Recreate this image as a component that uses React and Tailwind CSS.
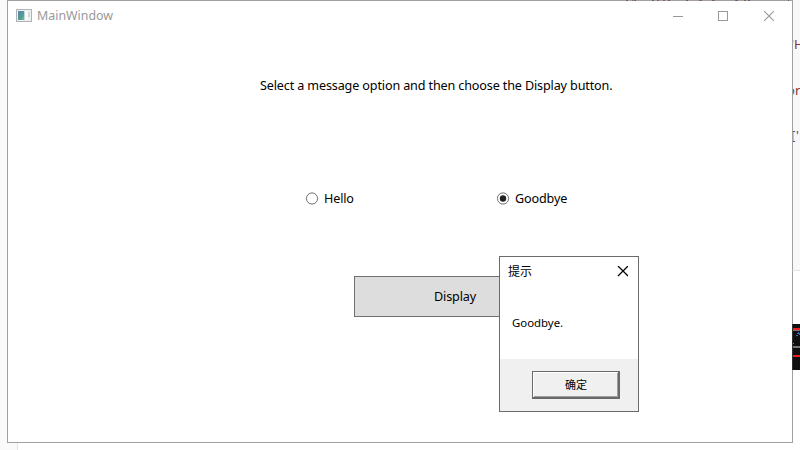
const pageFont = "font-['Noto_Sans','Noto_Sans_CJK_SC',sans-serif]";
const label = "text-[12.6px] leading-[20px] tracking-[-0.14px] whitespace-nowrap";

function WindowIcon() {
  return (
    <svg width="16" height="13" viewBox="0 0 16 13" shapeRendering="crispEdges" aria-hidden="true">
      <defs>
        <linearGradient id="pane" x1="0" y1="0" x2="1" y2="1">
          <stop offset="0" stopColor="#5a86b4" />
          <stop offset=".55" stopColor="#4f9a94" />
          <stop offset="1" stopColor="#7cb88c" />
        </linearGradient>
      </defs>
      <rect x="0.5" y="0.5" width="15" height="12" fill="#eef0f1" stroke="#b0b3b6" />
      <rect x="2" y="2" width="6" height="9" fill="url(#pane)" />
      <rect x="8" y="2" width="1" height="9" fill="#c3d8d6" />
      <rect x="9" y="2" width="3" height="9" fill="#f8f8f8" />
      <rect x="12" y="3" width="2" height="5" fill="#cfdcd8" />
    </svg>
  );
}

function TitleBar() {
  return (
    <header className="flex h-[29px] items-center pl-2 text-[#999999]">
      <WindowIcon />
      <h1 className="ml-[5px] flex-1 text-[12.4px] leading-[18px]">MainWindow</h1>
      <div className="mr-[18px] flex items-center">
        <svg width="10" height="10" shapeRendering="crispEdges"><path d="M0 5.5H10" stroke="currentColor" /></svg>
        <svg className="ml-[35px]" width="10" height="10" shapeRendering="crispEdges"><rect x=".5" y=".5" width="9" height="9" fill="none" stroke="currentColor" /></svg>
        <svg className="ml-9" width="10" height="10"><path d="M0 0L10 10M10 0L0 10" stroke="currentColor" strokeWidth="1.1" /></svg>
      </div>
    </header>
  );
}

function Radio({ text, checked }) {
  return (
    <div className="flex items-center gap-[5px]">
      <svg width="13" height="14" aria-hidden="true">
        <circle cx="6" cy="6.5" r="5.6" fill="white" stroke="#707070" />
        {checked && <circle cx="6" cy="6.5" r="3.2" fill="#212121" />}
      </svg>
      <span className={label}>{text}</span>
    </div>
  );
}

function MessageBox() {
  return (
    <section className="absolute left-[499px] top-[256px] flex h-[156px] w-[140px] flex-col border border-[#6b6b6b] bg-white">
      <header className="flex h-[29px] items-center justify-between pl-2 pr-[10px]">
        <h2 className="text-[12px] leading-[18px]">提示</h2>
        <svg width="11" height="11"><path d="M1 0L11 10M11 0L1 10" stroke="black" strokeWidth="1.25" /></svg>
      </header>
      <p className="flex-1 pl-3 pt-[28px] text-[11.4px] leading-[18px]">Goodbye.</p>
      <footer className="flex h-[52px] items-start justify-end bg-[#f0f0f0] pr-[18px] pt-3">
        <button className="h-7 w-[88px] border border-b-2 border-r-2 border-[#696969] pl-px text-[11px] leading-[16px] shadow-[inset_1px_1px_0_#fff,inset_-1px_-1px_0_#a0a0a0]">
          确定
        </button>
      </footer>
    </section>
  );
}

function Backdrop() {
  return (
    <aside className="flex w-2 flex-col overflow-hidden">
      <div className="h-[271px] overflow-hidden border-b border-l border-b-[#e5e5e5] border-l-[#a0a0a0] bg-[#f8f8f8] text-[13px] leading-[18px] text-[#8b3030]">
        <div className="mt-[35px] flex whitespace-nowrap"><span className="-ml-[2px] w-[4px] text-[#38548c]">'</span>H</div>
        <div className="-ml-[6px] mt-[28px] whitespace-nowrap"><span className="text-[#38548c]">o</span>r</div>
        <div className="-ml-[2px] mt-[27px] flex whitespace-nowrap"><span className="w-[5px] text-[#38548c]">[</span>'</div>
      </div>
      <div className="h-[53px] w-px bg-[#a0a0a0]" />
      <div className="flex h-[46px] flex-col border-l border-[#303030] bg-[#101010] pt-1">
        <div className="h-[2px] bg-[#ed1c24]" />
        <div className="h-px bg-[#777777]" />
        <svg width="7" height="13" shapeRendering="crispEdges" aria-hidden="true">
          <path d="M3 4.5H5M4 2.5H7M5 1.5H6M6 3.5H7" stroke="#3a6fc4" />
          <path d="M0 12.5H1" stroke="#7188a8" />
        </svg>
        <div className="mt-[2px] h-[2px] bg-[#777777]" />
        <div className="mt-[7px] h-[2px] bg-[#ed1c24]" />
      </div>
      <div className="h-[73px] w-px bg-[#a0a0a0]" />
    </aside>
  );
}

function TopEdge() {
  return (
    <svg className="block shrink-0" width="785" height="1" shapeRendering="crispEdges" aria-hidden="true">
      <path d="M0 .5H785" stroke="#a3a0a2" />
      <path d="M619 .5h2m6 0h2m16 0h2m14 0h2m16 0h2m12 0h2m10 0h2m22 0h2m10 0h2m38 0h1" stroke="#655e78" />
      <path d="M625 .5h1m24 0h2m4 0h2m34 0h2m12 0h2m20 0h1m8 0h2" stroke="#8b6258" />
    </svg>
  );
}

export default function App() {
  return (
    <div className={`relative flex h-[450px] w-[800px] overflow-hidden bg-white text-black ${pageFont}`}>
      <div className="w-[7px] bg-[#fafafa]" />
      <div className="flex w-[785px] flex-col">
        <TopEdge />
        <main className="flex h-[442px] flex-col border-b border-l border-[#a0a0a0] bg-white">
          <TitleBar />
          <p className={`ml-[252px] mt-[46px] ${label}`}>
            Select a message option and then choose the Display button.
          </p>
          <div className="ml-[298px] mt-[93px] flex">
            <div className="w-[191px]"><Radio text="Hello" /></div>
            <Radio text="Goodbye" checked />
          </div>
          <button className={`ml-[346px] mt-[67px] h-[41px] w-[202px] border border-[#707070] bg-[#dddddd] pt-px ${label}`}>
            Display
          </button>
        </main>
        <div className="h-[7px] w-[11px] border-r border-[#e5e5e5] bg-[#fafafa]" />
      </div>
      <Backdrop />
      <MessageBox />
    </div>
  );
}
